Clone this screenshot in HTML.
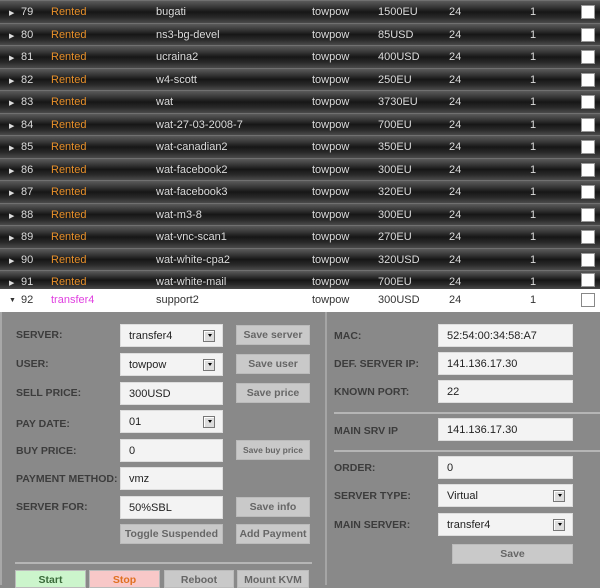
<!DOCTYPE html>
<html><head><meta charset="utf-8"><style>
*{margin:0;padding:0;box-sizing:border-box}
body{width:600px;height:585px;overflow:hidden;background:#898989;font-family:"Liberation Sans",sans-serif;font-size:11px;position:relative}
.r{position:absolute;left:0;width:600px;height:22.5px;background:linear-gradient(#5a5a5a 0%,#3a3a3a 25%,#161616 50%,#2a2a2a 75%,#4a4a4a 100%);border-top:1px solid #707070;color:#ddd}
.r span,.w span{position:absolute;top:5px;white-space:nowrap}
.t{left:9px;font-size:7px;top:8px!important}
.n{left:21px}.s{left:51px;color:#e8902a}.nm{left:156px}.o{left:312px}.p{left:378px}.h{left:449px}.c{left:530px}
.cb{position:absolute;left:581px;top:4px;width:14px;height:14px;background:#fff;border:1px solid #999}
.w{position:absolute;left:0;top:289px;width:600px;height:23px;background:#fff;color:#333}
.lab{position:absolute;font-weight:bold;color:#3c3c3c;font-size:10.5px;white-space:nowrap}
.in{position:absolute;background:#f3f3f3;border:1px solid #ddd;height:23px;color:#222;padding:5px 0 0 8px;font-size:11px}
.sel:after{content:"";position:absolute;right:7px;top:5px;width:10px;height:10px;background:#ddd;border:1px solid #777;box-shadow:inset 1px 1px #fff}
.sel:before{content:"";position:absolute;right:10px;top:9px;border:2px solid transparent;border-top:3px solid #000;z-index:2}
.b{position:absolute;background:#c9c9c9;border:1px solid #bbb;color:#666;font-weight:bold;text-align:center;font-size:10.5px;height:20px;line-height:18px;white-space:nowrap;overflow:hidden}
.hr{position:absolute;height:2px;background:#b5b5b5}
</style></head><body>
<div class="r" style="top:0"><span class="t">▶</span><span class="n">79</span><span class="s">Rented</span><span class="nm">bugati</span><span class="o">towpow</span><span class="p">1500EU</span><span class="h">24</span><span class="c">1</span><div class="cb"></div></div>
<div class="r" style="top:22.5px"><span class="t">▶</span><span class="n">80</span><span class="s">Rented</span><span class="nm">ns3-bg-devel</span><span class="o">towpow</span><span class="p">85USD</span><span class="h">24</span><span class="c">1</span><div class="cb"></div></div>
<div class="r" style="top:45px"><span class="t">▶</span><span class="n">81</span><span class="s">Rented</span><span class="nm">ucraina2</span><span class="o">towpow</span><span class="p">400USD</span><span class="h">24</span><span class="c">1</span><div class="cb"></div></div>
<div class="r" style="top:67.5px"><span class="t">▶</span><span class="n">82</span><span class="s">Rented</span><span class="nm">w4-scott</span><span class="o">towpow</span><span class="p">250EU</span><span class="h">24</span><span class="c">1</span><div class="cb"></div></div>
<div class="r" style="top:90px"><span class="t">▶</span><span class="n">83</span><span class="s">Rented</span><span class="nm">wat</span><span class="o">towpow</span><span class="p">3730EU</span><span class="h">24</span><span class="c">1</span><div class="cb"></div></div>
<div class="r" style="top:112.5px"><span class="t">▶</span><span class="n">84</span><span class="s">Rented</span><span class="nm">wat-27-03-2008-7</span><span class="o">towpow</span><span class="p">700EU</span><span class="h">24</span><span class="c">1</span><div class="cb"></div></div>
<div class="r" style="top:135px"><span class="t">▶</span><span class="n">85</span><span class="s">Rented</span><span class="nm">wat-canadian2</span><span class="o">towpow</span><span class="p">350EU</span><span class="h">24</span><span class="c">1</span><div class="cb"></div></div>
<div class="r" style="top:157.5px"><span class="t">▶</span><span class="n">86</span><span class="s">Rented</span><span class="nm">wat-facebook2</span><span class="o">towpow</span><span class="p">300EU</span><span class="h">24</span><span class="c">1</span><div class="cb"></div></div>
<div class="r" style="top:180px"><span class="t">▶</span><span class="n">87</span><span class="s">Rented</span><span class="nm">wat-facebook3</span><span class="o">towpow</span><span class="p">320EU</span><span class="h">24</span><span class="c">1</span><div class="cb"></div></div>
<div class="r" style="top:202.5px"><span class="t">▶</span><span class="n">88</span><span class="s">Rented</span><span class="nm">wat-m3-8</span><span class="o">towpow</span><span class="p">300EU</span><span class="h">24</span><span class="c">1</span><div class="cb"></div></div>
<div class="r" style="top:225px"><span class="t">▶</span><span class="n">89</span><span class="s">Rented</span><span class="nm">wat-vnc-scan1</span><span class="o">towpow</span><span class="p">270EU</span><span class="h">24</span><span class="c">1</span><div class="cb"></div></div>
<div class="r" style="top:247.5px"><span class="t">▶</span><span class="n">90</span><span class="s">Rented</span><span class="nm">wat-white-cpa2</span><span class="o">towpow</span><span class="p">320USD</span><span class="h">24</span><span class="c">1</span><div class="cb"></div></div>
<div class="r" style="top:270px;height:19px"><span class="t">▶</span><span class="n">91</span><span class="s">Rented</span><span class="nm">wat-white-mail</span><span class="o">towpow</span><span class="p">700EU</span><span class="h">24</span><span class="c">1</span><div class="cb" style="top:2px"></div></div>
<div class="w"><span class="t" style="left:9px">▼</span><span class="n">92</span><span class="s" style="color:#e040e0">transfer4</span><span class="nm">support2</span><span class="o">towpow</span><span class="p">300USD</span><span class="h">24</span><span class="c">1</span><div class="cb" style="border-color:#888"></div></div>

<div style="position:absolute;left:0;top:312px;width:2px;height:273px;background:#a8a8a8"></div>
<div style="position:absolute;left:325px;top:312px;width:2px;height:273px;background:#a5a5a5"></div>

<div class="lab" style="left:16px;top:329px">SERVER:</div>
<div class="in sel" style="left:120px;top:324px;width:103px">transfer4</div>
<div class="b" style="left:236px;top:325px;width:74px">Save server</div>
<div class="lab" style="left:16px;top:358px">USER:</div>
<div class="in sel" style="left:120px;top:353px;width:103px">towpow</div>
<div class="b" style="left:236px;top:354px;width:74px">Save user</div>
<div class="lab" style="left:16px;top:387px">SELL PRICE:</div>
<div class="in" style="left:120px;top:382px;width:103px">300USD</div>
<div class="b" style="left:236px;top:383px;width:74px">Save price</div>
<div class="lab" style="left:16px;top:418px">PAY DATE:</div>
<div class="in sel" style="left:120px;top:410px;width:103px">01</div>
<div class="lab" style="left:16px;top:445px">BUY PRICE:</div>
<div class="in" style="left:120px;top:439px;width:103px">0</div>
<div class="b" style="left:236px;top:440px;width:74px;font-size:8.5px">Save buy price</div>
<div class="lab" style="left:16px;top:473px">PAYMENT METHOD:</div>
<div class="in" style="left:120px;top:467px;width:103px">vmz</div>
<div class="lab" style="left:16px;top:501px">SERVER FOR:</div>
<div class="in" style="left:120px;top:496px;width:103px">50%SBL</div>
<div class="b" style="left:236px;top:497px;width:74px">Save info</div>
<div class="b" style="left:120px;top:524px;width:103px">Toggle Suspended</div>
<div class="b" style="left:236px;top:524px;width:74px">Add Payment</div>
<div class="hr" style="left:15px;top:562px;width:297px"></div>
<div class="b" style="left:15px;top:570px;width:71px;background:#ccf5cc;color:#3a6a3a;height:18px">Start</div>
<div class="b" style="left:89px;top:570px;width:71px;background:#f8c8c8;color:#e07020;height:18px">Stop</div>
<div class="b" style="left:164px;top:570px;width:70px;height:18px">Reboot</div>
<div class="b" style="left:237px;top:570px;width:72px;height:18px">Mount KVM</div>

<div class="lab" style="left:334px;top:330px">MAC:</div>
<div class="in" style="left:438px;top:324px;width:135px">52:54:00:34:58:A7</div>
<div class="lab" style="left:334px;top:358px">DEF. SERVER IP:</div>
<div class="in" style="left:438px;top:352px;width:135px">141.136.17.30</div>
<div class="lab" style="left:334px;top:386px">KNOWN PORT:</div>
<div class="in" style="left:438px;top:380px;width:135px">22</div>
<div class="hr" style="left:334px;top:412px;width:266px"></div>
<div class="lab" style="left:334px;top:425px">MAIN SRV IP</div>
<div class="in" style="left:438px;top:418px;width:135px">141.136.17.30</div>
<div class="hr" style="left:334px;top:450px;width:266px"></div>
<div class="lab" style="left:334px;top:462px">ORDER:</div>
<div class="in" style="left:438px;top:456px;width:135px">0</div>
<div class="lab" style="left:334px;top:490px">SERVER TYPE:</div>
<div class="in sel" style="left:438px;top:484px;width:135px">Virtual</div>
<div class="lab" style="left:334px;top:519px">MAIN SERVER:</div>
<div class="in sel" style="left:438px;top:513px;width:135px">transfer4</div>
<div class="b" style="left:452px;top:544px;width:121px">Save</div>
</body></html>
